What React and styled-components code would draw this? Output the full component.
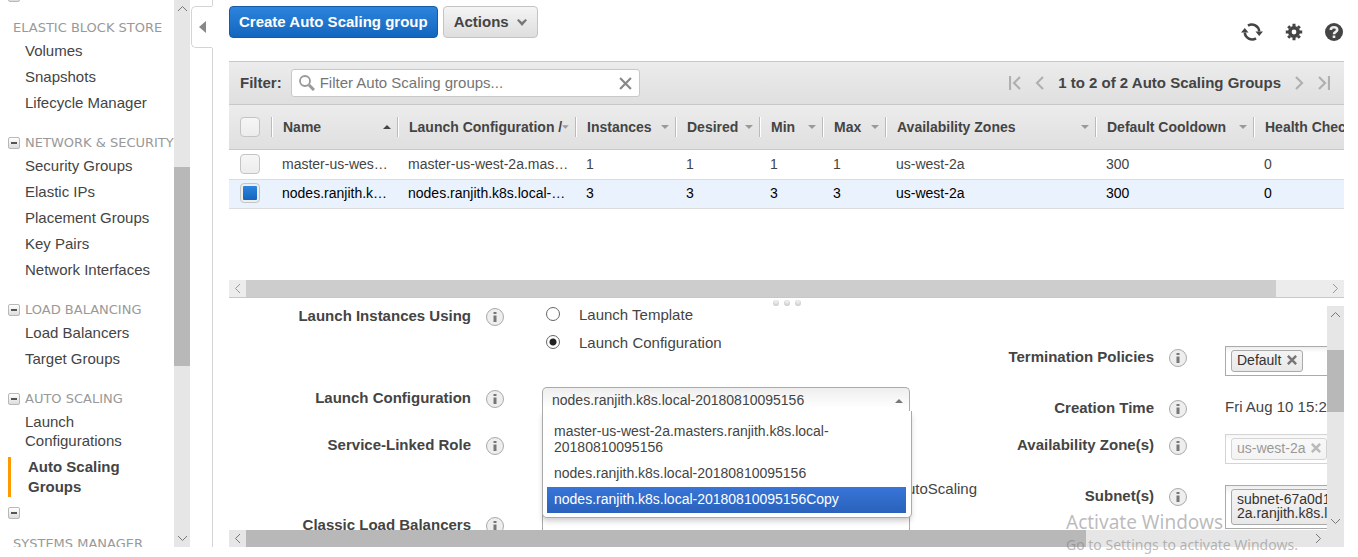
import React from "react";
import styled, { createGlobalStyle, css } from "styled-components";

const Global = createGlobalStyle`
  * { box-sizing: border-box; }
  body { margin: 0; background: #fff; color: #444; font: 15px/20px "Liberation Sans", Arial, sans-serif; }
  button, input, select { font: inherit; color: inherit; }
`;

const Page = styled.div`
  display: flex;
  height: 100vh;
  padding: 0 14px 10px 0;
  overflow: hidden;
  position: relative;
`;

/* ---------- side navigation ---------- */
const Sidebar = styled.aside`
  display: flex;
  flex: 0 0 190px;
  overflow: hidden;
`;
const Nav = styled.nav`
  flex: 1;
  min-width: 0;
  overflow: hidden;
  white-space: nowrap;
`;
const NavScroll = styled.div`
  margin-top: -10px;
  padding-left: 8px;
`;
const NavGroup = styled.section`
  margin-bottom: 17px;
`;
const NavHeading = styled.h2`
  display: flex;
  align-items: center;
  height: 20px;
  margin: 0;
  padding-left: ${(p) => (p.$bare ? 5 : 0)}px;
  font: 13px/20px "DejaVu Sans", Verdana, sans-serif;
  color: #999;
`;
const ToggleBox = styled.button`
  flex: none;
  display: grid;
  place-items: center;
  width: 12px;
  height: 12px;
  margin: 0 5px 0 0;
  padding: 0;
  border: 1px solid #b8b8b8;
  border-radius: 2px;
  background: linear-gradient(#fff, #ddd);
  &::before { content: ""; width: 6px; height: 2px; background: #555; }
`;
const ToggleRow = styled.div`
  display: flex;
  height: 12px;
  margin-bottom: ${(p) => p.$gap}px;
`;
const NavList = styled.ul`
  list-style: none;
  margin: 0;
  padding: 0;
`;
const NavLink = styled.a`
  display: block;
  padding: 3px 0 3px 17px;
  line-height: ${(p) => (p.$tall ? 19 : 20)}px;
  color: #444;
  text-decoration: none;
  ${(p) => p.$active && css`
    margin: 4px 0 10px;
    padding: 0 0 0 17px;
    border-left: 3px solid #ff9900;
    line-height: 20px;
    font-weight: bold;
  `}
`;

/* ---------- scroll bars ---------- */
const VBar = styled.div`
  flex: 0 0 ${(p) => p.$size}px;
  min-width: 0;
  display: flex;
  flex-direction: column;
  align-items: center;
  background: #e6e6e6;
`;
const HBar = styled.div`
  flex: none;
  display: flex;
  align-items: center;
  height: 17px;
  background: ${(p) => (p.$light ? "#ececec" : "#e6e6e6")};
`;
const Arrow = styled.span`
  flex: 0 0 17px;
  display: grid;
  place-items: center;
  min-width: 11px;
  height: 17px;
`;
const Thumb = styled.div`
  flex: ${(p) => p.$grow} 1 0;
  align-self: stretch;
  background: ${(p) => (p.$light ? "#cdcdcd" : "#b8b8b8")};
`;
const Track = styled.div`
  flex: ${(p) => p.$grow} 1 0;
`;

/* ---------- collapse tab ---------- */
const Divider = styled.div`
  flex: 0 0 23px;
  border-right: 1px solid #d4d4d4;
  padding: 6px 0 0 1px;
`;
const CollapseTab = styled.button`
  display: flex;
  align-items: center;
  padding: 0 0 0 7px;
  width: 21px;
  height: 42px;
  margin: 0;
  border: 1px solid #d4d4d4;
  border-right: 0;
  border-radius: 5px 0 0 5px;
  background: #fff;
  box-shadow: 1px 0 0 #fff;
`;

/* ---------- main ---------- */
const Main = styled.main`
  flex: 1;
  min-width: 0;
  display: flex;
  flex-direction: column;
  margin-left: 16px;
`;
const Toolbar = styled.header`
  flex: none;
  display: flex;
  gap: 5px;
  height: 61px;
  padding-top: 6px;
  overflow: hidden;
`;
const Button = styled.button`
  display: flex;
  align-items: center;
  justify-content: center;
  gap: 8px;
  height: 32px;
  padding: 0 ${(p) => (p.$primary ? 9 : 10)}px;
  border: 1px solid ${(p) => (p.$primary ? "#155ba6" : "#c4c4c4")};
  border-radius: 4px;
  background: ${(p) => (p.$primary ? "linear-gradient(#2d84dc, #1366bd)" : "linear-gradient(#f4f4f4, #dedede)")};
  color: ${(p) => (p.$primary ? "#fff" : "#444")};
  font-weight: bold;
  white-space: nowrap;
`;
const IconRow = styled.div`
  display: flex;
  align-items: center;
  gap: 22px;
  height: 52px;
  margin-left: auto;
  padding-right: 1px;
`;
const IconButton = styled.button`
  display: grid;
  place-items: center;
  padding: 0;
  border: 0;
  background: none;
  color: #444;
`;
const FilterBar = styled.div`
  flex: none;
  display: flex;
  align-items: center;
  height: 44px;
  padding: 0 14px 0 11px;
  border: solid #c8c8c8;
  border-width: 1px 0;
  background: linear-gradient(#ececec, #dfdfdf);
  font-weight: bold;
`;
const SearchBox = styled.div`
  display: flex;
  align-items: center;
  width: 349px;
  height: 28px;
  margin-left: 9px;
  padding: 0 7px;
  gap: 5px;
  border: 1px solid #c8c8c8;
  border-radius: 3px;
  background: #fff;
`;
const SearchInput = styled.input`
  flex: 1;
  min-width: 0;
  padding: 0;
  border: 0;
  outline: 0;
  background: none;
  font-weight: normal;
  &::placeholder { color: #757575; opacity: 1; }
`;
const Pager = styled.div`
  display: flex;
  align-items: center;
  gap: 14px;
  margin-left: auto;
  white-space: nowrap;
`;

/* ---------- table ---------- */
const TableArea = styled.div`
  flex: none;
  height: 175px;
  overflow: hidden;
`;
const Table = styled.table`
  width: 100%;
  table-layout: fixed;
  border-collapse: separate;
  border-spacing: 0;
  font-size: 14px;
`;
const HeadRow = styled.tr`
  height: 45px;
  background: linear-gradient(#ececec, #dfdfdf);
`;
const HeadCell = styled.th`
  padding: 0;
  border-bottom: 1px solid #c8c8c8;
  text-align: left;
  overflow: hidden;
`;
const HeadInner = styled.div`
  display: flex;
  align-items: center;
  justify-content: space-between;
  height: 20px;
  padding: 0 6px 0 11px;
  border-left: 1px solid #bbb;
  box-shadow: inset 1px 0 0 #fff;
  white-space: nowrap;
`;
const Row = styled.tr`
  height: ${(p) => (p.$selected ? 29 : 30)}px;
  background: ${(p) => (p.$selected ? "#eaf2fe" : "#fff")};
  color: ${(p) => (p.$selected ? "#000" : "#444")};
`;
const Cell = styled.td`
  padding: 0 0 2px 11px;
  border-bottom: 1px solid #dcdcdc;
  white-space: nowrap;
  overflow: hidden;
`;
const CheckBox = styled.input`
  appearance: none;
  display: block;
  width: 20px;
  height: 20px;
  margin: 0 0 0 ${(p) => (p.$head ? 11 : 0)}px;
  border: 1px solid #c4c4c4;
  border-radius: 4px;
  background: linear-gradient(#f6f6f6, #ececec);
  &:checked {
    background: linear-gradient(#2d84dc, #1366bd) content-box, #eee;
    padding: 2px;
  }
`;
const Splitter = styled.div`
  flex: none;
  display: flex;
  justify-content: center;
  align-items: flex-end;
  gap: 5px;
  height: 9px;
  border-top: 1px solid #c8c8c8;
`;
const Dot = styled.i`
  width: 6px;
  height: 6px;
  border-radius: 3px;
  background: radial-gradient(circle at 50% 30%, #f4f4f4, #bdbdbd);
`;

/* ---------- details ---------- */
const Details = styled.section`
  flex: 1;
  min-height: 0;
  display: flex;
`;
const Forms = styled.form`
  flex: 1;
  min-width: 0;
  display: flex;
  overflow: hidden;
`;
const FormColumn = styled.div`
  flex: ${(p) => (p.$fluid ? "1 0 417px" : "0 0 683px")};
  padding-top: ${(p) => p.$top}px;
`;
const Field = styled.div`
  display: grid;
  grid-template-columns: 242px 18px 368px;
  column-gap: 15px;
  align-items: start;
  height: ${(p) => p.$height}px;
`;
const Label = styled.label`
  text-align: right;
  font-weight: bold;
  white-space: nowrap;
`;
const InfoIcon = styled.button`
  display: grid;
  place-items: center;
  width: 18px;
  height: 18px;
  margin-top: 2px;
  padding: 0;
  border: 1px solid #aaa;
  border-radius: 9px;
  background: #eee;
`;
const Control = styled.div`
  margin: -1px 0 0 23px;
  width: 368px;
  position: relative;
  white-space: nowrap;
`;
const RadioLabel = styled.label`
  display: flex;
  align-items: center;
  gap: 19px;
  height: 20px;
  margin-bottom: 8px;
`;
const Radio = styled.input`
  appearance: none;
  width: 14px;
  height: 14px;
  margin: 0 0 3px 4px;
  border: 1px solid #666;
  border-radius: 7px;
  background: #fff;
  &:checked { background: radial-gradient(circle, #222 3px, #fff 4px); }
`;
const Select = styled.select`
  appearance: none;
  display: block;
  width: 100%;
  height: 26px;
  padding: 0 9px 2px;
  border: 1px solid #aaa;
  border-bottom: 0;
  border-radius: 5px 5px 0 0;
  background: linear-gradient(#eee, #fff 80%);
  font-size: 14px;
`;
const SelectArrow = styled.span`
  position: absolute;
  right: 7px;
  top: 12px;
  display: flex;
`;
const Menu = styled.ul`
  position: absolute;
  z-index: 2;
  top: 24px;
  left: 0;
  width: 370px;
  margin: 0;
  padding: 8px 5px 4px 4px;
  list-style: none;
  border: 1px solid #aaa;
  border-top: 0;
  border-radius: 0 0 5px 5px;
  background: #fff;
  box-shadow: 0 4px 5px rgba(0, 0, 0, 0.15);
  font-size: 14px;
  line-height: 16px;
`;
const Option = styled.li`
  padding: 4px 60px 6px 7px;
  white-space: normal;
  ${(p) => p.$active && css`
    background: linear-gradient(#3875d7, #2a62bc);
    color: #fff;
  `}
`;
const RoleName = styled.p`
  width: 435px;
  margin: 0;
  padding-top: 45px;
  text-align: right;
`;
const TokenBox = styled.div`
  min-height: 30px;
  padding: 3px 5px;
  border: 1px solid #aaa;
  background: linear-gradient(#eee, #fff 20%);
  opacity: ${(p) => (p.$disabled ? 0.5 : 1)};
`;
const Token = styled.span`
  display: inline-flex;
  align-items: center;
  gap: 6px;
  min-height: 22px;
  padding: 2px 5px 4px;
  border: 1px solid #aaa;
  border-radius: 3px;
  background: linear-gradient(#f4f4f4, #e8e8e8);
  color: #333;
  font-size: 14px;
  line-height: 14px;
  vertical-align: top;
`;
const TokenRemove = styled.button`
  display: flex;
  padding: 0;
  border: 0;
  background: none;
`;

const Watermark = styled.aside`
  position: absolute;
  z-index: 3;
  right: 56px;
  bottom: 2px;
  width: 236px;
  color: rgba(120, 120, 120, 0.5);
  font: 14px/20px "Noto Sans", "Open Sans", sans-serif;
  white-space: nowrap;
  pointer-events: none;
`;
const WatermarkTitle = styled.div`
  font-size: 19px;
  line-height: 26px;
`;

const turns = { up: 0, right: 90, down: 180, left: 270 };
const Chevron = ({ dir, size = 11, color = "#777", width = 1 }) => (
  <svg width={size} height={size} viewBox="0 0 11 11" aria-hidden="true">
    <path d="M1 8 5.500 3.500 10 8" fill="none" stroke={color} strokeWidth={width} transform={`rotate(${turns[dir]} 5.500 5.500)`} />
  </svg>
);
const Triangle = ({ up, color = "#999" }) => (
  <svg width="8" height="4" viewBox="0 0 8 4" aria-hidden="true">
    <path d={up ? "M0 4 4 0 8 4Z" : "M0 0H8L4 4Z"} fill={color} />
  </svg>
);
const Cross = ({ size, color, width }) => (
  <svg width={size} height={size} viewBox="0 0 12 12" aria-hidden="true">
    <path d="M1 1 11 11M11 1 1 11" stroke={color} strokeWidth={width} />
  </svg>
);
const PageArrow = ({ end, flip }) => (
  <svg width={end ? 12 : 9} height="14" viewBox={end ? "0 0 12 14" : "0 0 9 14"} aria-hidden="true">
    <g transform={flip ? `translate(${end ? 12 : 9} 0) scale(-1 1)` : undefined} fill="none" stroke="#b0b0b0" strokeWidth="2.200">
      {end && <path d="M1 0V14" />}
      <path d={end ? "M11 1 5 7 11 13" : "M8 1 2 7 8 13"} />
    </g>
  </svg>
);

const Info = () => (
  <InfoIcon type="button" aria-label="More information">
    <svg width="4" height="10" viewBox="0 0 4 10"><path d="M.5 0H3.500V2H.5ZM.5 3.500H3.500V10H.5Z" fill="#777" /></svg>
  </InfoIcon>
);

const groups = [
  { title: "ELASTIC BLOCK STORE", bare: true, items: ["Volumes", "Snapshots", "Lifecycle Manager"] },
  { title: "NETWORK & SECURITY", items: ["Security Groups", "Elastic IPs", "Placement Groups", "Key Pairs", "Network Interfaces"] },
  { title: "LOAD BALANCING", items: ["Load Balancers", "Target Groups"] },
];

const columns = [
  ["Name", 126], ["Launch Configuration /", 178], ["Instances", 100], ["Desired", 84], ["Min", 63],
  ["Max", 63], ["Availability Zones", 210], ["Default Cooldown", 158], ["Health Check Grace"],
];
const rows = [
  { cells: ["master-us-wes…", "master-us-west-2a.mas…", 1, 1, 1, 1, "us-west-2a", 300, 0] },
  { selected: true, cells: ["nodes.ranjith.k…", "nodes.ranjith.k8s.local-…", 3, 3, 3, 3, "us-west-2a", 300, 0] },
];

export default function App() {
  return (
    <Page>
      <Global />
      <Sidebar>
        <Nav>
          <NavScroll>
            <ToggleRow $gap={16}><ToggleBox aria-label="Collapse" /></ToggleRow>
            {groups.map((g) => (
              <NavGroup key={g.title}>
                <NavHeading $bare={g.bare}>{!g.bare && <ToggleBox aria-label="Collapse" />}{g.title}</NavHeading>
                <NavList>{g.items.map((i) => <li key={i}><NavLink href="#">{i}</NavLink></li>)}</NavList>
              </NavGroup>
            ))}
            <NavHeading><ToggleBox aria-label="Collapse" />AUTO SCALING</NavHeading>
            <NavList>
              <li><NavLink href="#" $tall>Launch<br />Configurations</NavLink></li>
              <li><NavLink href="#" $active>Auto Scaling<br />Groups</NavLink></li>
            </NavList>
            <ToggleRow $gap={15}><ToggleBox aria-label="Collapse" /></ToggleRow>
            <NavHeading $bare>SYSTEMS MANAGER</NavHeading>
          </NavScroll>
        </Nav>
        <VBar $size={16}>
          <Track $grow={167}><Arrow><Chevron dir="up" /></Arrow></Track>
          <Thumb $grow={199} />
          <Track $grow={164} />
          <Arrow><Chevron dir="down" /></Arrow>
        </VBar>
      </Sidebar>
      <Divider>
        <CollapseTab aria-label="Collapse navigation">
          <svg width="7" height="12" viewBox="0 0 7 12"><path d="M7 0V12L0 6Z" fill="#888" /></svg>
        </CollapseTab>
      </Divider>
      <Main>
        <Toolbar>
          <Button $primary>Create Auto Scaling group</Button>
          <Button>Actions <svg width="10" height="7" viewBox="0 0 10 7"><path d="M0 1.200 1.500 0 5 3 8.500 0 10 1.200 5 7Z" fill="#777" /></svg></Button>
          <IconRow>
            <IconButton aria-label="Refresh">
              <svg width="22" height="20" viewBox="0 0 22 20" fill="none" stroke="currentColor" strokeWidth="2.600">
                <path d="M7 3.600A7.400 7.400 0 0 1 18.200 9.500M15 16.400A7.400 7.400 0 0 1 3.800 10.500" />
                <path d="M14.500 9.500H22L18.200 14ZM0 10.500 3.800 6 7.500 10.500Z" fill="currentColor" stroke="none" />
              </svg>
            </IconButton>
            <IconButton aria-label="Settings">
              <svg width="18" height="18" viewBox="0 0 18 18" fill="none" stroke="currentColor">
                <circle cx="9" cy="9" r="4.200" strokeWidth="3.600" />
                <path d="M9 .8V4M9 14V17.200M.8 9H4M14 9H17.200M3.200 3.200 5 5M13 13 14.800 14.800M14.800 3.200 13 5M5 13 3.200 14.800" strokeWidth="3" />
              </svg>
            </IconButton>
            <IconButton aria-label="Help">
              <svg width="18" height="18" viewBox="0 0 18 18">
                <circle cx="9" cy="9" r="9" fill="currentColor" />
                <path d="M5.800 7C5.800 3.300 12.200 3.300 12.200 7 12.200 9 9 8.800 9 11.200M9 12.500V15" fill="none" stroke="#eee" strokeWidth="2.600" />
              </svg>
            </IconButton>
          </IconRow>
        </Toolbar>
        <FilterBar>
          <label htmlFor="filter">Filter:</label>
          <SearchBox>
            <svg width="16" height="16" viewBox="0 0 16 16" fill="none" stroke="#999"><circle cx="6" cy="6" r="5" strokeWidth="1.800" /><path d="M10 10 15 15" strokeWidth="3" /></svg>
            <SearchInput id="filter" placeholder="Filter Auto Scaling groups..." />
            <IconButton aria-label="Clear filter"><Cross size={13} color="#888" width={2} /></IconButton>
          </SearchBox>
          <Pager>
            <IconButton aria-label="First page"><PageArrow end /></IconButton>
            <IconButton aria-label="Previous page"><PageArrow /></IconButton>
            <span>1 to 2 of 2 Auto Scaling Groups</span>
            <IconButton aria-label="Next page"><PageArrow flip /></IconButton>
            <IconButton aria-label="Last page"><PageArrow end flip /></IconButton>
          </Pager>
        </FilterBar>
        <TableArea>
          <Table>
            <colgroup><col width="42" />{columns.map(([n, w]) => <col key={n} width={w} />)}</colgroup>
            <thead>
              <HeadRow>
                <HeadCell><CheckBox type="checkbox" $head aria-label="Select all" /></HeadCell>
                {columns.map(([name], i) => (
                  <HeadCell key={name}>
                    <HeadInner>{name}{i < 8 && <Triangle up={i === 0} color={i === 0 ? "#444" : undefined} />}</HeadInner>
                  </HeadCell>
                ))}
              </HeadRow>
            </thead>
            <tbody>
              {rows.map((r) => (
                <Row key={r.cells[0]} $selected={r.selected}>
                  <Cell><CheckBox type="checkbox" defaultChecked={r.selected} aria-label={r.cells[0]} /></Cell>
                  {r.cells.map((c, i) => <Cell key={i}>{c}</Cell>)}
                </Row>
              ))}
            </tbody>
          </Table>
        </TableArea>
        <HBar $light>
          <Arrow><Chevron dir="left" color="#999" /></Arrow>
          <Thumb $light $grow={1030} />
          <Track $grow={51} />
          <Arrow><Chevron dir="right" color="#999" /></Arrow>
        </HBar>
        <Splitter><Dot /><Dot /><Dot /></Splitter>
        <Details>
          <Forms>
            <FormColumn $top={0}>
              <Field $height={82}>
                <Label as="span">Launch Instances Using</Label>
                <Info />
                <Control>
                  <RadioLabel><Radio type="radio" name="using" />Launch Template</RadioLabel>
                  <RadioLabel><Radio type="radio" name="using" defaultChecked />Launch Configuration</RadioLabel>
                </Control>
              </Field>
              <Field $height={47}>
                <Label htmlFor="config">Launch Configuration</Label>
                <Info />
                <Control>
                  <Select id="config"><option>nodes.ranjith.k8s.local-20180810095156</option></Select>
                  <SelectArrow><Triangle up color="#777" /></SelectArrow>
                  <Menu role="listbox" aria-label="Launch configurations">
                    <Option role="option">master-us-west-2a.masters.ranjith.k8s.local-20180810095156</Option>
                    <Option role="option">nodes.ranjith.k8s.local-20180810095156</Option>
                    <Option role="option" aria-selected="true" $active>nodes.ranjith.k8s.local-20180810095156Copy</Option>
                  </Menu>
                </Control>
              </Field>
              <Field $height={80}>
                <Label as="span">Service-Linked Role</Label>
                <Info />
                <Control><RoleName>AWSServiceRoleForAutoScaling</RoleName></Control>
              </Field>
              <Field $height={60}>
                <Label as="span">Classic Load Balancers</Label>
                <Info />
                <Control><TokenBox /></Control>
              </Field>
            </FormColumn>
            <FormColumn $fluid $top={41}>
              <Field $height={51}>
                <Label as="span">Termination Policies</Label>
                <Info />
                <Control><TokenBox><Token>Default<TokenRemove type="button" aria-label="Remove"><Cross size={10} color="#777" width={3} /></TokenRemove></Token></TokenBox></Control>
              </Field>
              <Field $height={37}>
                <Label as="span">Creation Time</Label>
                <Info />
                <Control>Fri Aug 10 15:21:45</Control>
              </Field>
              <Field $height={51}>
                <Label as="span">Availability Zone(s)</Label>
                <Info />
                <Control><TokenBox $disabled><Token>us-west-2a<TokenRemove type="button" aria-label="Remove"><Cross size={10} color="#777" width={3} /></TokenRemove></Token></TokenBox></Control>
              </Field>
              <Field $height={60}>
                <Label as="span">Subnet(s)</Label>
                <Info />
                <Control><TokenBox><Token>subnet-67a0d1<br />2a.ranjith.k8s.local</Token></TokenBox></Control>
              </Field>
            </FormColumn>
          </Forms>
          <VBar $size={17}>
            <Track $grow={44}><Arrow><Chevron dir="up" /></Arrow></Track>
            <Thumb $grow={62} />
            <Track $grow={101} />
            <Arrow><Chevron dir="down" /></Arrow>
          </VBar>
        </Details>
        <HBar>
          <Arrow><Chevron dir="left" /></Arrow>
          <Thumb $grow={840} />
          <Track $grow={224} />
          <Arrow><Chevron dir="right" /></Arrow>
          <Arrow />
        </HBar>
      </Main>
      <Watermark>
        <WatermarkTitle>Activate Windows</WatermarkTitle>
        Go to Settings to activate Windows.
      </Watermark>
    </Page>
  );
}
